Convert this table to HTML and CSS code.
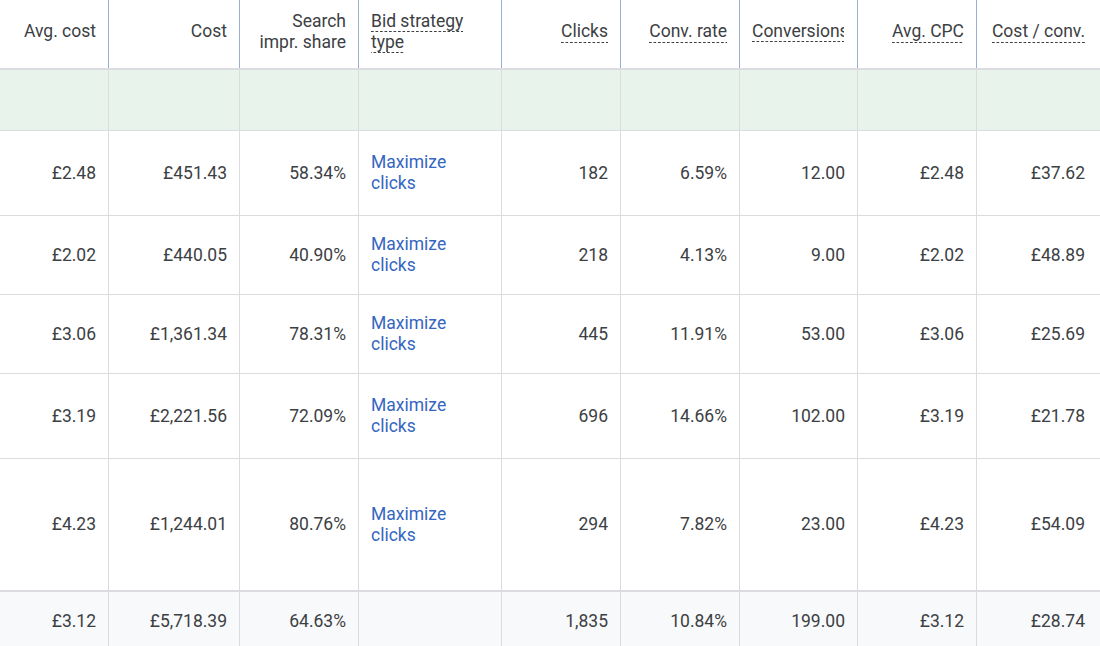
FILE: index.html
```html
<!DOCTYPE html>
<html>
<head>
<meta charset="utf-8">
<link rel="stylesheet" href="styles.css">
</head>
<body>
<div class="grid">
  <div class="row head">
    <div class="cell num"><span>Avg. cost</span></div>
    <div class="cell num"><span>Cost</span></div>
    <div class="cell num"><span>Search<br>impr. share</span></div>
    <div class="cell txt"><span class="wrap"><span class="tip">Bid strategy type</span></span></div>
    <div class="cell num"><span class="tip">Clicks</span></div>
    <div class="cell num"><span class="tip">Conv. rate</span></div>
    <div class="cell num clip"><span class="clipbox"><span class="tip">Conversions</span></span></div>
    <div class="cell num"><span class="tip">Avg. CPC</span></div>
    <div class="cell num last"><span class="tip">Cost / conv.</span></div>
  </div>
  <div class="row green">
    <div class="cell"></div><div class="cell"></div><div class="cell"></div><div class="cell"></div><div class="cell"></div><div class="cell"></div><div class="cell"></div><div class="cell"></div><div class="cell last"></div>
  </div>
  <div class="row r1">
    <div class="cell num">£2.48</div><div class="cell num">£451.43</div><div class="cell num">58.34%</div>
    <div class="cell txt link">Maximize<br>clicks</div>
    <div class="cell num">182</div><div class="cell num">6.59%</div><div class="cell num">12.00</div><div class="cell num">£2.48</div><div class="cell num last">£37.62</div>
  </div>
  <div class="row r2">
    <div class="cell num">£2.02</div><div class="cell num">£440.05</div><div class="cell num">40.90%</div>
    <div class="cell txt link">Maximize<br>clicks</div>
    <div class="cell num">218</div><div class="cell num">4.13%</div><div class="cell num">9.00</div><div class="cell num">£2.02</div><div class="cell num last">£48.89</div>
  </div>
  <div class="row r3">
    <div class="cell num">£3.06</div><div class="cell num">£1,361.34</div><div class="cell num">78.31%</div>
    <div class="cell txt link">Maximize<br>clicks</div>
    <div class="cell num">445</div><div class="cell num">11.91%</div><div class="cell num">53.00</div><div class="cell num">£3.06</div><div class="cell num last">£25.69</div>
  </div>
  <div class="row r4">
    <div class="cell num">£3.19</div><div class="cell num">£2,221.56</div><div class="cell num">72.09%</div>
    <div class="cell txt link">Maximize<br>clicks</div>
    <div class="cell num">696</div><div class="cell num">14.66%</div><div class="cell num">102.00</div><div class="cell num">£3.19</div><div class="cell num last">£21.78</div>
  </div>
  <div class="row r5">
    <div class="cell num">£4.23</div><div class="cell num">£1,244.01</div><div class="cell num">80.76%</div>
    <div class="cell txt link">Maximize<br>clicks</div>
    <div class="cell num">294</div><div class="cell num">7.82%</div><div class="cell num">23.00</div><div class="cell num">£4.23</div><div class="cell num last">£54.09</div>
  </div>
  <div class="row total">
    <div class="cell num">£3.12</div><div class="cell num">£5,718.39</div><div class="cell num">64.63%</div>
    <div class="cell txt"></div>
    <div class="cell num">1,835</div><div class="cell num">10.84%</div><div class="cell num">199.00</div><div class="cell num">£3.12</div><div class="cell num last">£28.74</div>
  </div>
</div>
</body>
</html>
```

FILE: styles.css
```css
html, body {
  margin: 0;
  padding: 0;
  background: #ffffff;
  overflow: hidden;
}
body {
  width: 1100px;
  height: 646px;
  font-family: Roboto, "Noto Sans", Arial, sans-serif;
  font-size: 17.5px;
  color: #3c4043;
}
.grid {
  width: 1103px;
}
.row {
  display: grid;
  grid-template-columns: 109px 131px 119px 143px 119px 119px 118px 119px 126px;
  box-sizing: border-box;
  border-bottom: 1px solid #dadce0;
}
.cell {
  box-sizing: border-box;
  border-right: 1px solid #dadce0;
  display: flex;
  align-items: center;
  padding: 0 12px 0 12px;
  line-height: 21px;
  overflow: hidden;
  white-space: nowrap;
}
.cell.num {
  justify-content: flex-end;
  text-align: right;
  padding-right: 12px;
}
.cell.txt {
  justify-content: flex-start;
  text-align: left;
}
.cell.last {
  border-right: none;
  padding-right: 18px;
}
.head {
  height: 70px;
  border-bottom: 2px solid #dadce0;
}
.head .cell {
  border-right: 1.5px solid #9aaed3;
  padding-bottom: 5px;
}
.head .cell.last {
  border-right: none;
}
.head .cell.txt {
  white-space: normal;
}
.wrap {
  display: block;
  width: 100px;
}
.head .cell.clip {
  justify-content: flex-start;
  padding-right: 13px;
}
.clipbox {
  display: block;
  overflow: hidden;
  white-space: nowrap;
  padding-bottom: 3px;
  margin-bottom: -3px;
}
.tip {
  padding-bottom: 1px;
  background-image: linear-gradient(to right, #3c4043 55%, transparent 55%);
  background-repeat: repeat-x;
  background-position: left bottom;
  background-size: 4.5px 1px;
}
.green {
  height: 61px;
  background: #e8f3eb;
}
.r1 { height: 85px; }
.r2 { height: 79px; }
.r3 { height: 79px; }
.r4 { height: 85px; }
.r5 { height: 132px; }
.link {
  color: #3566c0;
}
.total {
  height: 60px;
  border-top: 1px solid #dadce0;
  border-bottom: none;
  background: #f8f9fa;
  padding-bottom: 1px;
}
```
